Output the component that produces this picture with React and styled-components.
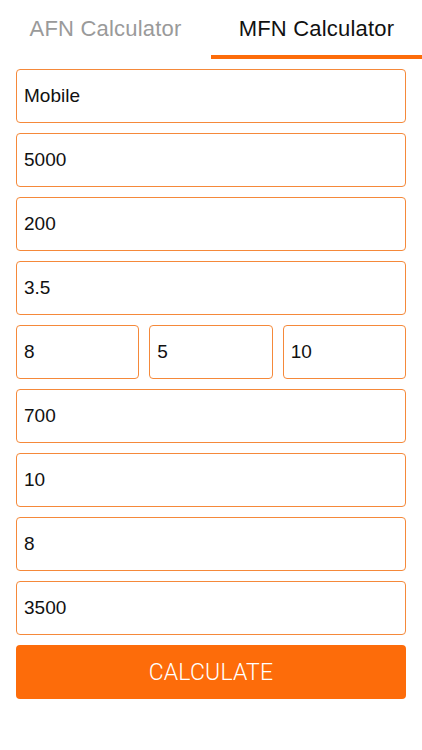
import React from "react";
import styled, { createGlobalStyle } from "styled-components";

const Global = createGlobalStyle`
  html, body { margin: 0; padding: 0; background: #ffffff; }
  body { font-family: "Liberation Sans", Arial, sans-serif; }
  * { box-sizing: border-box; }
`;

const Page = styled.div`
  width: 422px;
  height: 750px;
  background: #fff;
  display: flex;
  flex-direction: column;
`;

const Tabs = styled.div`
  display: flex;
  height: 59px;
`;

const Tab = styled.div`
  flex: 1;
  display: flex;
  align-items: center;
  justify-content: center;
  padding-top: 2px;
  font-size: 22px;
  color: ${(p) => (p.$active ? "#111" : "#9a9a9a")};
  border-bottom: 4px solid ${(p) => (p.$active ? "#fd6c0a" : "transparent")};
  letter-spacing: 0.2px;
`;

const Form = styled.div`
  display: flex;
  flex-direction: column;
  gap: 10px;
  padding: 10px 16px 0;
`;

const Row = styled.div`
  display: grid;
  grid-template-columns: 1fr 1fr 1fr;
  gap: 10px;
`;

const Field = styled.div`
  height: 54px;
  border: 1px solid #f5893a;
  border-radius: 4px;
  display: flex;
  align-items: center;
  padding-left: 7px;
  font-size: 19px;
  color: #111;
`;

const Button = styled.div`
  height: 54px;
  background: #fd6c0a;
  border-radius: 4px;
  display: flex;
  align-items: center;
  justify-content: center;
  color: #fff;
  font-family: Roboto, "Liberation Sans", sans-serif;
  font-weight: 300;
  font-size: 23px;
  letter-spacing: 0.2px;
`;

export default function App() {
  return (
    <Page>
      <Global />
      <Tabs>
        <Tab>AFN Calculator</Tab>
        <Tab $active>MFN Calculator</Tab>
      </Tabs>
      <Form>
        <Field>Mobile</Field>
        <Field>5000</Field>
        <Field>200</Field>
        <Field>3.5</Field>
        <Row>
          <Field>8</Field>
          <Field>5</Field>
          <Field>10</Field>
        </Row>
        <Field>700</Field>
        <Field>10</Field>
        <Field>8</Field>
        <Field>3500</Field>
        <Button>CALCULATE</Button>
      </Form>
    </Page>
  );
}
